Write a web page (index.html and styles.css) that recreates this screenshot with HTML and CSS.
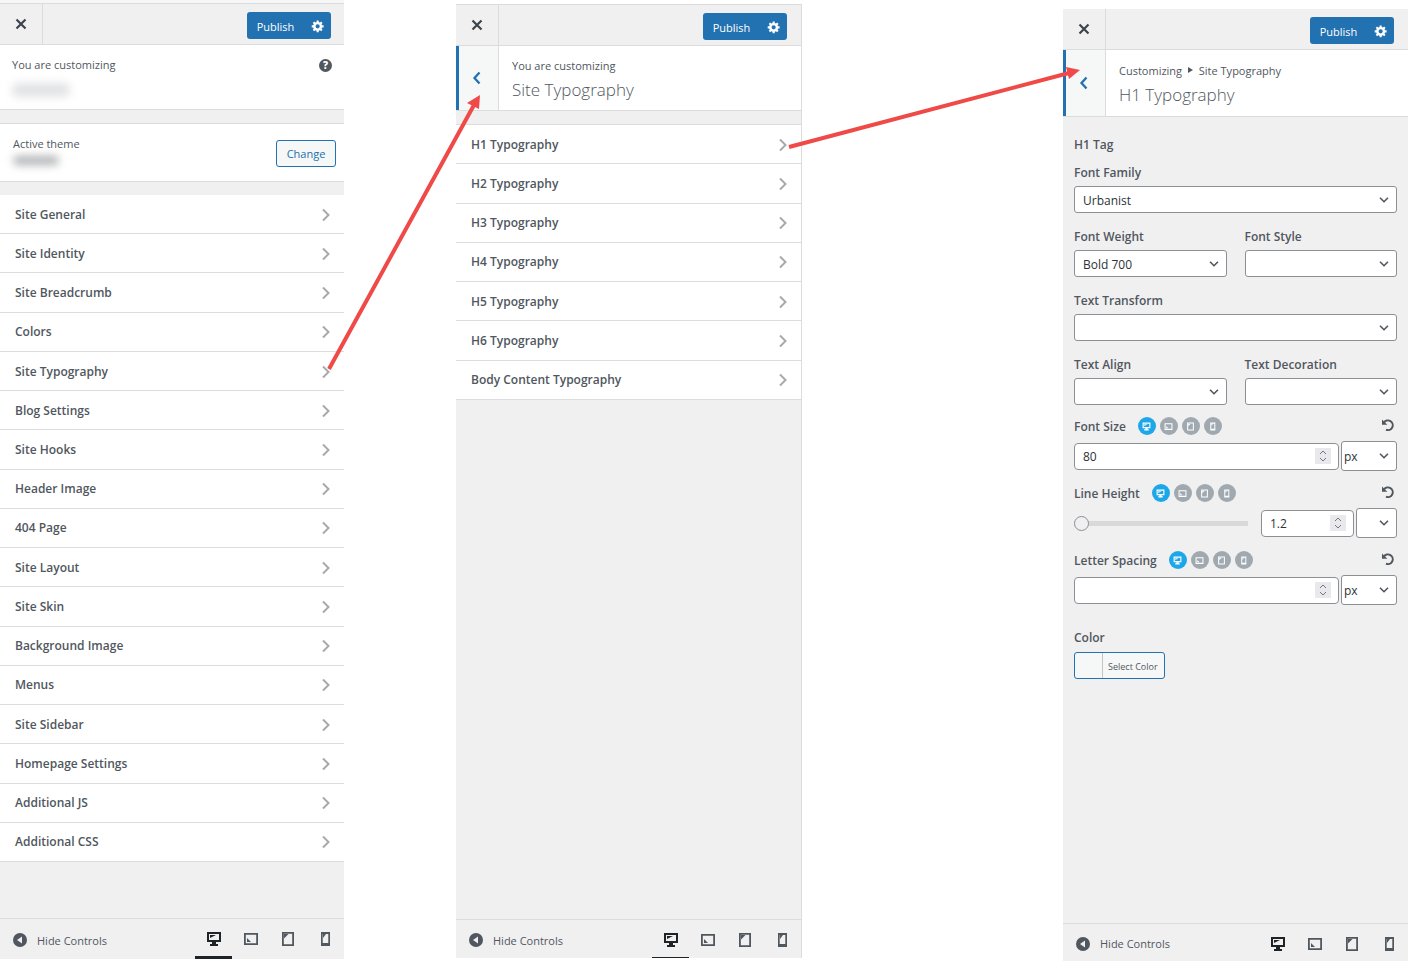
FILE: index.html
```
<!DOCTYPE html>
<html lang="en">
<head>
  <meta charset="UTF-8">
  <title>Customize: Site Typography</title>
  <link rel="stylesheet" href="styles.css">
</head>
<body>

  <!-- Shared icons -->
  <svg class="sprite" aria-hidden="true">
    <symbol id="close" viewBox="0 0 12 12"><path d="M1.5 1.5l9 9M10.5 1.5l-9 9" fill="none" stroke="currentColor" stroke-width="2.2"/></symbol>
    <symbol id="gear" viewBox="0 0 20 20"><path fill="currentColor" fill-rule="evenodd" d="M18 12h-2.180c-.17.7-.44 1.350-.81 1.930l1.540 1.540-2.100 2.100-1.540-1.540c-.58.36-1.230.63-1.910.79V19H8v-2.180c-.68-.16-1.330-.43-1.910-.79l-1.540 1.540-2.120-2.120 1.540-1.540c-.36-.58-.63-1.230-.79-1.910H1V9.030h2.170c.16-.7.44-1.350.8-1.940L2.430 5.550l2.100-2.100 1.540 1.540c.58-.37 1.240-.64 1.930-.81V2h3v2.180c.68.16 1.330.43 1.910.79l1.540-1.540 2.120 2.120-1.540 1.540c.36.59.64 1.240.8 1.940H18V12zm-8.500 1.500a3 3 0 1 0 0-6 3 3 0 0 0 0 6z"/></symbol>
    <symbol id="next" viewBox="0 0 10 14"><path d="M2 1.500l5.500 5.500L2 12.500" fill="none" stroke="currentColor" stroke-width="2"/></symbol>
    <symbol id="back" viewBox="0 0 10 14"><path d="M7.500 1.500L2.500 7l5 5.500" fill="none" stroke="currentColor" stroke-width="2.300"/></symbol>
    <symbol id="collapse" viewBox="0 0 14 14"><circle cx="7" cy="7" r="7" fill="currentColor"/><path d="M9 3.500v7L4 7z" fill="#f0f0f1"/></symbol>
    <symbol id="desktop" viewBox="0 0 16 16"><path fill="currentColor" fill-rule="evenodd" d="M1 1h14v10h-5v2h2v2H4v-2h2v-2H1zM3 3v6h10V3z"/><path d="M4 4h6L4 7z" fill="currentColor"/></symbol>
    <symbol id="landscape" viewBox="0 0 16 16"><path fill="currentColor" fill-rule="evenodd" d="M1 2h14v12H1zM2.800 3.800v8.400h10.400V3.800z"/><path d="M4 7l4 4H4z" fill="currentColor"/></symbol>
    <symbol id="tablet" viewBox="0 0 16 16"><path fill="currentColor" fill-rule="evenodd" d="M2 1h12v14H2zM3.800 2.800v10.400h8.400V2.800z"/><path d="M4 3h4.500L4 7.500z" fill="currentColor"/></symbol>
    <symbol id="phone" viewBox="0 0 16 16"><path fill="currentColor" fill-rule="evenodd" d="M4 1h9v14H4zM5.700 3v9h5.600V3z"/><path d="M6 3h3L6 7z" fill="currentColor"/></symbol>
    <symbol id="reset" viewBox="0 0 14 14"><path d="M3 4.500A4.800 4.800 0 1 1 5 11.600" fill="none" stroke="currentColor" stroke-width="2"/><path d="M1 1.500v5.300h5.300z" fill="currentColor"/></symbol>
  </svg>

  <div class="page">

    <!-- Root panel -->
    <section class="panel panel-root">
      <header class="topbar">
        <button class="close" aria-label="Close"><svg width="12" height="12"><use href="#close"/></svg></button>
        <div class="publish">
          <button>Publish</button>
          <button class="gear" aria-label="Publish settings"><svg width="14" height="14"><use href="#gear"/></svg></button>
        </div>
      </header>
      <div class="info">
        <div>
          <p>You are customizing</p>
          <span class="masked"></span>
        </div>
        <button class="help" aria-label="Help">?</button>
      </div>
      <div class="theme">
        <div>
          <p>Active theme</p>
          <span class="masked dark"></span>
        </div>
        <button class="change">Change</button>
      </div>
      <ul class="menu menu-root">
        <li><a href="#">Site General<svg><use href="#next"/></svg></a></li>
        <li><a href="#">Site Identity<svg><use href="#next"/></svg></a></li>
        <li><a href="#">Site Breadcrumb<svg><use href="#next"/></svg></a></li>
        <li><a href="#">Colors<svg><use href="#next"/></svg></a></li>
        <li><a href="#">Site Typography<svg><use href="#next"/></svg></a></li>
        <li><a href="#">Blog Settings<svg><use href="#next"/></svg></a></li>
        <li><a href="#">Site Hooks<svg><use href="#next"/></svg></a></li>
        <li><a href="#">Header Image<svg><use href="#next"/></svg></a></li>
        <li><a href="#">404 Page<svg><use href="#next"/></svg></a></li>
        <li><a href="#">Site Layout<svg><use href="#next"/></svg></a></li>
        <li><a href="#">Site Skin<svg><use href="#next"/></svg></a></li>
        <li><a href="#">Background Image<svg><use href="#next"/></svg></a></li>
        <li><a href="#">Menus<svg><use href="#next"/></svg></a></li>
        <li><a href="#">Site Sidebar<svg><use href="#next"/></svg></a></li>
        <li><a href="#">Homepage Settings<svg><use href="#next"/></svg></a></li>
        <li><a href="#">Additional JS<svg><use href="#next"/></svg></a></li>
        <li><a href="#">Additional CSS<svg><use href="#next"/></svg></a></li>
      </ul>
      <footer class="bottom">
        <button class="hide"><svg><use href="#collapse"/></svg>Hide Controls</button>
        <div class="views">
          <button class="active" aria-label="Desktop"><svg><use href="#desktop"/></svg></button>
          <button aria-label="Landscape"><svg><use href="#landscape"/></svg></button>
          <button aria-label="Tablet"><svg><use href="#tablet"/></svg></button>
          <button aria-label="Mobile"><svg><use href="#phone"/></svg></button>
        </div>
      </footer>
    </section>

    <!-- Site Typography panel -->
    <section class="panel panel-typo">
      <header class="topbar">
        <button class="close" aria-label="Close"><svg width="12" height="12"><use href="#close"/></svg></button>
        <div class="publish">
          <button>Publish</button>
          <button class="gear" aria-label="Publish settings"><svg width="14" height="14"><use href="#gear"/></svg></button>
        </div>
      </header>
      <div class="heading">
        <button class="back" aria-label="Back"><svg><use href="#back"/></svg></button>
        <div>
          <p>You are customizing</p>
          <h2>Site Typography</h2>
        </div>
      </div>
      <ul class="menu menu-typo">
        <li><a href="#">H1 Typography<svg><use href="#next"/></svg></a></li>
        <li><a href="#">H2 Typography<svg><use href="#next"/></svg></a></li>
        <li><a href="#">H3 Typography<svg><use href="#next"/></svg></a></li>
        <li><a href="#">H4 Typography<svg><use href="#next"/></svg></a></li>
        <li><a href="#">H5 Typography<svg><use href="#next"/></svg></a></li>
        <li><a href="#">H6 Typography<svg><use href="#next"/></svg></a></li>
        <li><a href="#">Body Content Typography<svg><use href="#next"/></svg></a></li>
      </ul>
      <footer class="bottom">
        <button class="hide"><svg><use href="#collapse"/></svg>Hide Controls</button>
        <div class="views">
          <button class="active" aria-label="Desktop"><svg><use href="#desktop"/></svg></button>
          <button aria-label="Landscape"><svg><use href="#landscape"/></svg></button>
          <button aria-label="Tablet"><svg><use href="#tablet"/></svg></button>
          <button aria-label="Mobile"><svg><use href="#phone"/></svg></button>
        </div>
      </footer>
    </section>

    <!-- H1 Typography panel -->
    <section class="panel panel-h1">
      <header class="topbar">
        <button class="close" aria-label="Close"><svg width="12" height="12"><use href="#close"/></svg></button>
        <div class="publish">
          <button>Publish</button>
          <button class="gear" aria-label="Publish settings"><svg width="14" height="14"><use href="#gear"/></svg></button>
        </div>
      </header>
      <div class="heading">
        <button class="back" aria-label="Back"><svg><use href="#back"/></svg></button>
        <div>
          <p>Customizing <span class="sep"></span> Site Typography</p>
          <h2>H1 Typography</h2>
        </div>
      </div>

      <form class="controls">
        <h3>H1 Tag</h3>
        <div class="field">
          <label for="family">Font Family</label>
          <select id="family"><option>Urbanist</option></select>
        </div>
        <div class="pair">
          <div class="field">
            <label for="weight">Font Weight</label>
            <select id="weight"><option>Bold 700</option></select>
          </div>
          <div class="field">
            <label for="style">Font Style</label>
            <select id="style"><option></option></select>
          </div>
        </div>
        <div class="field">
          <label for="transform">Text Transform</label>
          <select id="transform"><option></option></select>
        </div>
        <div class="pair">
          <div class="field">
            <label for="align">Text Align</label>
            <select id="align"><option></option></select>
          </div>
          <div class="field">
            <label for="decoration">Text Decoration</label>
            <select id="decoration"><option></option></select>
          </div>
        </div>

        <div class="sized">
          <div class="sized-head">
            <label for="size">Font Size</label>
            <div class="devices">
              <button type="button" class="on" aria-label="Desktop"><svg><use href="#desktop"/></svg></button>
              <button type="button" aria-label="Landscape"><svg><use href="#landscape"/></svg></button>
              <button type="button" aria-label="Tablet"><svg><use href="#tablet"/></svg></button>
              <button type="button" aria-label="Mobile"><svg><use href="#phone"/></svg></button>
            </div>
            <button type="button" class="reset" aria-label="Reset"><svg><use href="#reset"/></svg></button>
          </div>
          <div class="sized-row">
            <input type="number" id="size" value="80">
            <select class="unit" aria-label="Font size unit"><option>px</option></select>
          </div>
        </div>

        <div class="sized">
          <div class="sized-head">
            <label for="line">Line Height</label>
            <div class="devices">
              <button type="button" class="on" aria-label="Desktop"><svg><use href="#desktop"/></svg></button>
              <button type="button" aria-label="Landscape"><svg><use href="#landscape"/></svg></button>
              <button type="button" aria-label="Tablet"><svg><use href="#tablet"/></svg></button>
              <button type="button" aria-label="Mobile"><svg><use href="#phone"/></svg></button>
            </div>
            <button type="button" class="reset" aria-label="Reset"><svg><use href="#reset"/></svg></button>
          </div>
          <div class="sized-row">
            <input type="range" min="1" max="100" value="1" aria-label="Line height slider">
            <input type="number" id="line" class="short" step="0.1" value="1.2">
            <select class="unit narrow" aria-label="Line height unit"><option></option></select>
          </div>
        </div>

        <div class="sized">
          <div class="sized-head">
            <label for="spacing">Letter Spacing</label>
            <div class="devices">
              <button type="button" class="on" aria-label="Desktop"><svg><use href="#desktop"/></svg></button>
              <button type="button" aria-label="Landscape"><svg><use href="#landscape"/></svg></button>
              <button type="button" aria-label="Tablet"><svg><use href="#tablet"/></svg></button>
              <button type="button" aria-label="Mobile"><svg><use href="#phone"/></svg></button>
            </div>
            <button type="button" class="reset" aria-label="Reset"><svg><use href="#reset"/></svg></button>
          </div>
          <div class="sized-row">
            <input type="number" id="spacing">
            <select class="unit" aria-label="Letter spacing unit"><option>px</option></select>
          </div>
        </div>

        <div class="color">
          <label for="color">Color</label>
          <button type="button" id="color"><span class="swatch"></span><span class="pick">Select Color</span></button>
        </div>
      </form>

      <footer class="bottom">
        <button class="hide"><svg><use href="#collapse"/></svg>Hide Controls</button>
        <div class="views">
          <button class="active" aria-label="Desktop"><svg><use href="#desktop"/></svg></button>
          <button aria-label="Landscape"><svg><use href="#landscape"/></svg></button>
          <button aria-label="Tablet"><svg><use href="#tablet"/></svg></button>
          <button aria-label="Mobile"><svg><use href="#phone"/></svg></button>
        </div>
      </footer>
    </section>

    <!-- Arrows from one step to the next -->
    <svg class="arrows" viewBox="0 0 1408 961" preserveAspectRatio="none" aria-hidden="true">
      <path d="M329 369L474 105M789 147L1069 73" fill="none" stroke="#ef4a47" stroke-width="4"/>
      <path d="M480 95L479 109L467 103zM1080 70L1069 79L1066 67z" fill="#ef4a47"/>
    </svg>
  </div>

</body>
</html>
```

FILE: styles.css
```
* {
  box-sizing: border-box;
}

body {
  margin: 0;
  background-color: white;
  color: #50575e;
  font-family: 'Open Sans', 'Noto Sans', sans-serif;
  font-size: 12px;
  line-height: 18px;
}

p, h2, h3, ul {
  margin: 0;
  padding: 0;
}

p {
  font-size: 11px;
}

button, input, select {
  font-family: inherit;
  font-size: 12px;
  color: inherit;
  margin: 0;
}

button {
  background: none;
  border: none;
  padding: 0;
  font-size: 11px;
  cursor: pointer;
}

svg {
  display: block;
}

.sprite {
  display: none;
}

.page {
  position: relative;
  display: grid;
  grid-template-columns: 344fr 112fr 346fr 261fr 345fr;
  min-height: 100vh;
}

.panel {
  display: flex;
  flex-direction: column;
  background-color: #f0f0f1;
}

.panel-root {
  grid-column: 1;
  border-top: 3px solid #f6f6f7;
  margin-bottom: 2px;
}

.panel-typo {
  grid-column: 3;
  margin-top: 4px;
  margin-bottom: 3px;
  border-right: 1px solid #dcdcde;
}

.panel-h1 {
  grid-column: 5;
  margin-top: 9px;
}

/* top bar */

.topbar {
  display: flex;
  justify-content: space-between;
  align-items: center;
  height: 42px;
  padding-right: 13px;
  border-top: 1px solid #dcdcde;
  border-bottom: 1px solid #dcdcde;
}

.panel-typo .topbar, .panel-h1 .topbar {
  padding-right: 14px;
}

.panel-h1 .topbar {
  height: 41px;
  border-top: none;
}

.close {
  display: flex;
  align-items: center;
  justify-content: center;
  align-self: stretch;
  width: 43px;
  border-right: 1px solid #dcdcde;
  color: #3c434a;
}

.publish {
  display: flex;
  height: 27px;
  margin-top: 3px;
  background-color: #2271b1;
  border-radius: 3px;
  color: white;
}

.publish button {
  width: 57px;
  padding-top: 2px;
}

.publish .gear {
  display: flex;
  align-items: center;
  justify-content: center;
  width: 27px;
  padding: 0;
}

/* info boxes */

.info, .theme {
  display: flex;
  justify-content: space-between;
  background-color: white;
  border-bottom: 1px solid #dcdcde;
}

.info {
  height: 65px;
  padding: 11px 12px;
}

.theme {
  align-items: center;
  height: 59px;
  margin-top: 13px;
  padding: 0 8px 0 13px;
  border-top: 1px solid #dcdcde;
}

.masked {
  display: block;
  width: 58px;
  height: 14px;
  margin-top: 9px;
  border-radius: 6px;
  background-color: #e2e3e5;
  filter: blur(4px);
}

.masked.dark {
  width: 46px;
  height: 9px;
  margin: 3px 0 5px;
  background-color: #b0b2b5;
}

.help {
  width: 13px;
  height: 13px;
  margin-top: 3px;
  border-radius: 50%;
  background-color: #50575e;
  color: white;
  font-size: 10px;
  font-weight: 800;
  line-height: 13px;
}

.change {
  width: 60px;
  height: 27px;
  margin-top: 2px;
  background-color: #f6f7f7;
  border: 1px solid #2271b1;
  border-radius: 3px;
  color: #2271b1;
}

.heading {
  display: flex;
  background-color: white;
  border-bottom: 1px solid #dcdcde;
  height: 65px;
}

.heading p {
  margin: 11px 0 0 13px;
}

.heading h2 {
  margin: 3px 0 0 13px;
  font-size: 17px;
  font-weight: 300;
  line-height: 24px;
}

.panel-h1 .heading {
  height: 67px;
}

.panel-h1 .heading p {
  margin-top: 12px;
}

.back {
  display: flex;
  align-items: center;
  justify-content: center;
  width: 43px;
  padding-right: 4px;
  background-color: #f6f7f7;
  border-left: 3px solid #2271b1;
  border-right: 1px solid #dcdcde;
  color: #2271b1;
}

.back svg {
  width: 10px;
  height: 14px;
}

.sep {
  display: inline-block;
  border-left: 5px solid #50575e;
  border-top: 3px solid transparent;
  border-bottom: 3px solid transparent;
  margin: 0 3px 2px;
}

/* menus */

.menu {
  display: grid;
  grid-auto-rows: 1fr;
  list-style: none;
}

.menu-root {
  min-height: 667px;
  margin-top: 13px;
}

.menu-typo {
  min-height: 276px;
  margin-top: 13px;
  border-top: 1px solid #dcdcde;
}

.menu li {
  background-color: white;
  border-bottom: 1px solid #dcdcde;
}

.menu a {
  display: flex;
  align-items: center;
  justify-content: space-between;
  height: 100%;
  padding: 1px 13px 0 15px;
  color: #50575e;
  font-weight: 600;
  text-decoration: none;
}

.menu svg {
  width: 10px;
  height: 14px;
  color: #a7aaad;
}

/* footer */

.bottom {
  display: flex;
  justify-content: space-between;
  height: 41px;
  margin-top: auto;
  padding-right: 1px;
  border-top: 1px solid #dcdcde;
}

.panel-typo .bottom {
  height: 39px;
}

.panel-h1 .bottom {
  height: 38px;
}

.hide {
  display: flex;
  align-items: center;
  gap: 10px;
  padding: 2px 0 0 13px;
}

.hide svg {
  width: 14px;
  height: 14px;
}

.views {
  display: flex;
}

.views button {
  display: flex;
  align-items: center;
  justify-content: center;
  width: 37px;
  padding-top: 2px;
  border-bottom: 3px solid transparent;
}

.panel-typo .views button {
  border-bottom-width: 1px;
}

.panel-h1 .views button {
  border-bottom: none;
}

.views svg {
  width: 16px;
  height: 16px;
}

.views .active {
  border-color: #1d2327;
  color: #1d2327;
}

/* controls */

.controls {
  padding: 17px 11px;
}

.controls h3 {
  margin-bottom: 6px;
  font-size: 12px;
  font-weight: 600;
  line-height: 22px;
}

.controls label {
  display: block;
  font-weight: 600;
  line-height: 22px;
}

.field {
  margin-bottom: 13px;
}

.pair {
  display: grid;
  grid-template-columns: 1fr 1fr;
  gap: 18px;
}

select {
  appearance: none;
  display: block;
  width: 100%;
  height: 27px;
  margin-top: 2px;
  padding: 1px 24px 0 8px;
  border: 1px solid #8c8f94;
  border-radius: 3px;
  background: white url("data:image/svg+xml,%3Csvg xmlns='http://www.w3.org/2000/svg' width='10' height='6'%3E%3Cpath d='M1 .7l4 4 4-4' fill='none' stroke='%2350575e' stroke-width='1.600'/%3E%3C/svg%3E") no-repeat right 7px center;
  color: #2c3338;
}

input[type=number] {
  appearance: textfield;
  flex: 1;
  min-width: 0;
  height: 27px;
  padding: 0 24px 0 8px;
  border: 1px solid #8c8f94;
  border-radius: 4px;
  background: white url("data:image/svg+xml,%3Csvg xmlns='http://www.w3.org/2000/svg' width='16' height='16'%3E%3Cpath d='M0 0h16v16H0z' fill='%23e9e9ed'/%3E%3Cpath d='M5 6l3-3 3 3M5 10l3 3 3-3' fill='none' stroke='%2375777b'/%3E%3C/svg%3E") no-repeat right 7px center;
  color: #2c3338;
}

input::-webkit-inner-spin-button {
  appearance: none;
}

.sized {
  margin-bottom: 12px;
}

.sized-head {
  display: flex;
  align-items: flex-end;
  height: 18px;
  margin-bottom: 5px;
}

.sized-head label {
  line-height: 18px;
}

.devices {
  display: flex;
  gap: 4px;
  margin: 0 0 1px 12px;
}

.devices button {
  display: flex;
  align-items: center;
  justify-content: center;
  width: 18px;
  height: 18px;
  border-radius: 50%;
  background-color: #a0a9b0;
  color: white;
}

.devices .on {
  background-color: #1ea7e8;
}

.devices svg {
  width: 9px;
  height: 9px;
}

.reset {
  margin: 0 2px 4px auto;
}

.reset svg {
  width: 14px;
  height: 14px;
}

.sized-row {
  display: flex;
  align-items: center;
  gap: 2px;
  margin-bottom: 14px;
}

.sized-row .unit {
  width: 56px;
  height: 30px;
  margin: 0;
  padding-left: 2px;
}

.sized-row .narrow {
  width: 41px;
}

.sized-row .short {
  flex: none;
  width: 93px;
}

input[type=range] {
  appearance: none;
  flex: 1;
  min-width: 0;
  height: 16px;
  margin-right: 11px;
  background: linear-gradient(#d9d9da, #d9d9da) no-repeat center / 100% 5px;
}

input[type=range]::-webkit-slider-thumb {
  appearance: none;
  width: 15px;
  height: 15px;
  border: 1px solid #8c8f94;
  border-radius: 50%;
  background-color: #f0f0f1;
}

.color {
  padding-top: 8px;
}

.color button {
  display: flex;
  height: 27px;
  margin-top: 3px;
  border: 1px solid #2271b1;
  border-radius: 3px;
  background-color: #f6f7f7;
  font-size: 9px;
  line-height: 27px;
}

.swatch {
  width: 28px;
  height: 25px;
  border-right: 1px solid #c3c4c7;
}

.pick {
  padding: 0 6px 0 5px;
}

/* arrows lie over the panels */

.arrows {
  position: absolute;
  inset: 0;
  width: 100%;
  height: 100%;
  pointer-events: none;
}
```
